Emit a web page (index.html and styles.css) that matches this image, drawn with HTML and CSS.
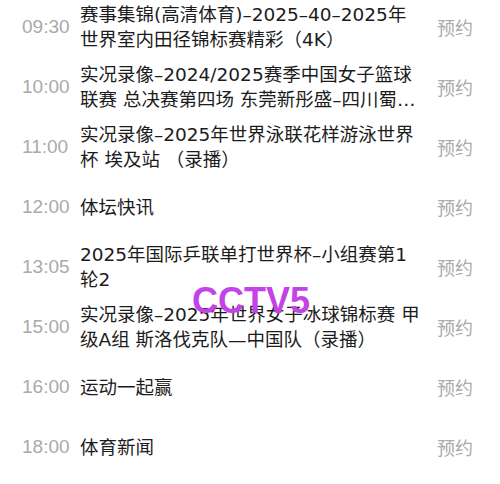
FILE: index.html
```html
<!DOCTYPE html>
<html lang="zh-CN">
<head>
<meta charset="utf-8">
<link rel="stylesheet" href="styles.css">
</head>
<body>
<div class="page">
  <ul class="schedule">
    <li class="row">
      <span class="time">09:30</span>
      <span class="title">赛事集锦(高清体育)–2025–40–2025年世界室内田径锦标赛精彩（4K）</span>
      <span class="action">预约</span>
    </li>
    <li class="row">
      <span class="time">10:00</span>
      <span class="title clamp">实况录像–2024/2025赛季中国女子篮球联赛 总决赛第四场 东莞新彤盛–四川蜀道（录播）</span>
      <span class="action">预约</span>
    </li>
    <li class="row">
      <span class="time">11:00</span>
      <span class="title">实况录像–2025年世界泳联花样游泳世界杯 埃及站 （录播）</span>
      <span class="action">预约</span>
    </li>
    <li class="row">
      <span class="time">12:00</span>
      <span class="title">体坛快讯</span>
      <span class="action">预约</span>
    </li>
    <li class="row">
      <span class="time">13:05</span>
      <span class="title">2025年国际乒联单打世界杯–小组赛第1轮2</span>
      <span class="action">预约</span>
    </li>
    <li class="row">
      <span class="time">15:00</span>
      <span class="title">实况录像–2025年世界女子冰球锦标赛 甲级A组 斯洛伐克队—中国队（录播）</span>
      <span class="action">预约</span>
    </li>
    <li class="row">
      <span class="time">16:00</span>
      <span class="title">运动一起赢</span>
      <span class="action">预约</span>
    </li>
    <li class="row">
      <span class="time">18:00</span>
      <span class="title">体育新闻</span>
      <span class="action">预约</span>
    </li>
  </ul>
  <div class="watermark">CCTV5</div>
</div>
</body>
</html>
```
FILE: styles.css
```css
html, body {
  margin: 0;
  padding: 0;
  background: #ffffff;
}
.page {
  position: relative;
  width: 500px;
  height: 484px;
  overflow: hidden;
}
.schedule {
  list-style: none;
  margin: -3px 0 0 0;
  padding: 0;
}
.row {
  display: flex;
  align-items: center;
  height: 60px;
}
.time {
  width: 58px;
  padding-left: 22px;
  flex-shrink: 0;
  font-family: "Liberation Sans", "Noto Sans", sans-serif;
  font-size: 19px;
  color: #aaaaaa;
}
.title {
  width: 342px;
  flex-shrink: 0;
  font-family: "DejaVu Sans", "Noto Sans CJK SC", sans-serif;
  font-size: 18.5px;
  line-height: 25px;
  color: #1c1c1c;
}
.clamp {
  display: -webkit-box;
  -webkit-box-orient: vertical;
  -webkit-line-clamp: 2;
  overflow: hidden;
}
.action {
  margin-left: auto;
  padding-right: 27px;
  font-family: "Noto Sans CJK SC", sans-serif;
  font-size: 18px;
  color: #ababab;
}
.watermark {
  position: absolute;
  left: 192px;
  top: 280px;
  font-family: "Liberation Sans", sans-serif;
  font-weight: bold;
  font-size: 36px;
  color: #c443e8;
}
```
